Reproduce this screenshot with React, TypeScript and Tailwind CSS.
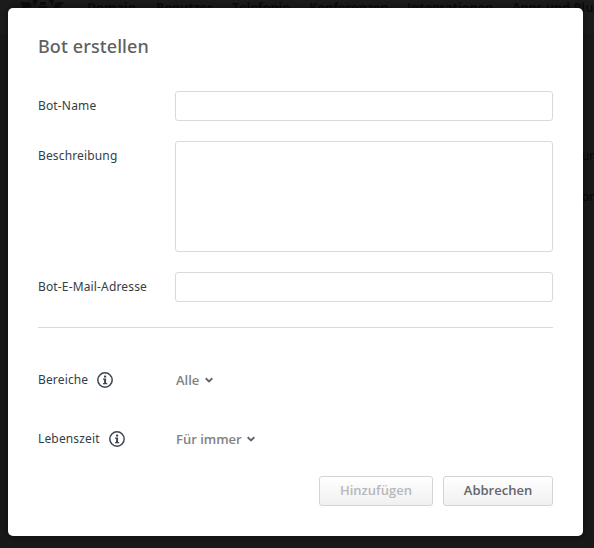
import type { ReactNode } from "react";

const navItems = [
  { label: "Domain", width: "w-[69px]" },
  { label: "Benutzer", width: "w-[76px]" },
  { label: "Telefonie", width: "w-[77px]" },
  { label: "Konferenzen", width: "w-[98px]" },
  { label: "Integrationen", width: "w-[105px]" },
  { label: "Apps und Plugins", width: "w-[120px]" },
];

function InfoIcon() {
  return (
    <svg width="16" height="16" viewBox="0 0 16 16" className="block shrink-0" fill="none">
      <circle cx="8" cy="8" r="7.2" stroke="#3c464f" strokeWidth="1.5" />
      <rect x="7" y="3.6" width="2.2" height="1.9" fill="#3c464f" />
      <path d="M6 6.6h3.1v4.5h1.1v1.1H6v-1.1h1.1V7.7H6z" fill="#3c464f" />
    </svg>
  );
}

function Chevron() {
  return (
    <svg width="8" height="6" viewBox="0 0 8 6" className="block" fill="none">
      <path d="M0.7 1.3 4 4.4 7.3 1.3" stroke="#5c6670" strokeWidth="1.9" />
    </svg>
  );
}

function Logo() {
  return (
    <svg width="48" height="12" viewBox="0 0 48 12" className="mr-[19px] block" fill="#0c0c0c">
      <path d="M0 2h9l3 4-4 2H3zM13 0h5l-4 6zM20 2h6v3h-6zM19 6h8v2h-8zM29 0h5l-1 6zM35 4l3-2h6l-5 6h-5z" />
    </svg>
  );
}

function Label({ children }: { children: ReactNode }) {
  return (
    <span className="font-['Noto_Sans'] text-[12px] leading-[16px] tracking-[0.15px] text-[#353d45]">{children}</span>
  );
}

function Row({ label, className, fieldClass }: { label: string; className: string; fieldClass: string }) {
  return (
    <label className={`flex items-start ${className}`}>
      <span className="flex w-[137px] pt-[7px]">
        <Label>{label}</Label>
      </span>
      <span className={`block w-[378px] rounded-[3px] border border-[#d9dadb] bg-white ${fieldClass}`} />
    </label>
  );
}

function Choice({ label, value, className }: { label: string; value: string; className: string }) {
  return (
    <div className={`flex h-[18px] items-center ${className}`}>
      <div className="flex w-[138px] items-center gap-[9px]">
        <Label>{label}</Label>
        <InfoIcon />
      </div>
      <button className="flex items-center gap-[5.5px] text-[13px] leading-[18px] font-semibold text-[#808285]">
        {value}
        <Chevron />
      </button>
    </div>
  );
}

export default function App() {
  return (
    <div
      className="relative h-[548px] w-[594px] overflow-hidden bg-[#191919]"
      style={{ fontFamily: '"Open Sans", "Noto Sans", sans-serif' }}
    >
      <header className="flex h-[34px] w-[700px] items-start bg-[#1c1c1c] pl-5">
        <Logo />
        <nav className="flex text-[12.5px] leading-[16px] font-bold whitespace-nowrap text-[#0c0c0c]">
          {navItems.map((item) => (
            <span key={item.label} className={`shrink-0 ${item.width}`}>
              {item.label}
            </span>
          ))}
        </nav>
      </header>
      <div className="flex flex-col gap-[25px] pt-[114px] pl-[582px] text-[12px] leading-[16px] text-[#070707]">
        <span>un</span>
        <span>on</span>
      </div>

      <div
        role="dialog"
        className="absolute top-2 left-2 h-[528px] w-[575px] rounded-[5px] bg-white px-[30px] shadow-[0_0_8px_rgba(0,0,0,0.5)]"
      >
        <h1 className="pt-[26px] font-['Noto_Sans'] text-[18px] leading-[25px] font-medium tracking-[0.1px] text-[#5e5f62]">
          Bot erstellen
        </h1>
        <Row label="Bot-Name" className="mt-8" fieldClass="h-[30px]" />
        <Row label="Beschreibung" className="mt-5" fieldClass="h-[111px]" />
        <Row label="Bot-E-Mail-Adresse" className="mt-5" fieldClass="h-[30px]" />
        <hr className="mt-[25px] border-[#d9dadb]" />
        <Choice label="Bereiche" value="Alle" className="mt-[43px]" />
        <Choice label="Lebenszeit" value="Für immer" className="mt-[41px]" />
        <div className="mt-[28px] flex justify-end gap-[10px] text-[13px] leading-[18px] font-semibold">
          <button className="h-[30px] w-[114px] rounded-[3px] border border-[#d3d4d5] bg-linear-to-b from-white to-[#f0f0f0] pb-[2px] text-[#b7b8b9]">
            Hinzufügen
          </button>
          <button className="h-[30px] w-[110px] rounded-[3px] border border-[#d3d4d5] bg-linear-to-b from-white to-[#f0f0f0] pb-[2px] text-[#636569]">
            Abbrechen
          </button>
        </div>
      </div>
    </div>
  );
}
